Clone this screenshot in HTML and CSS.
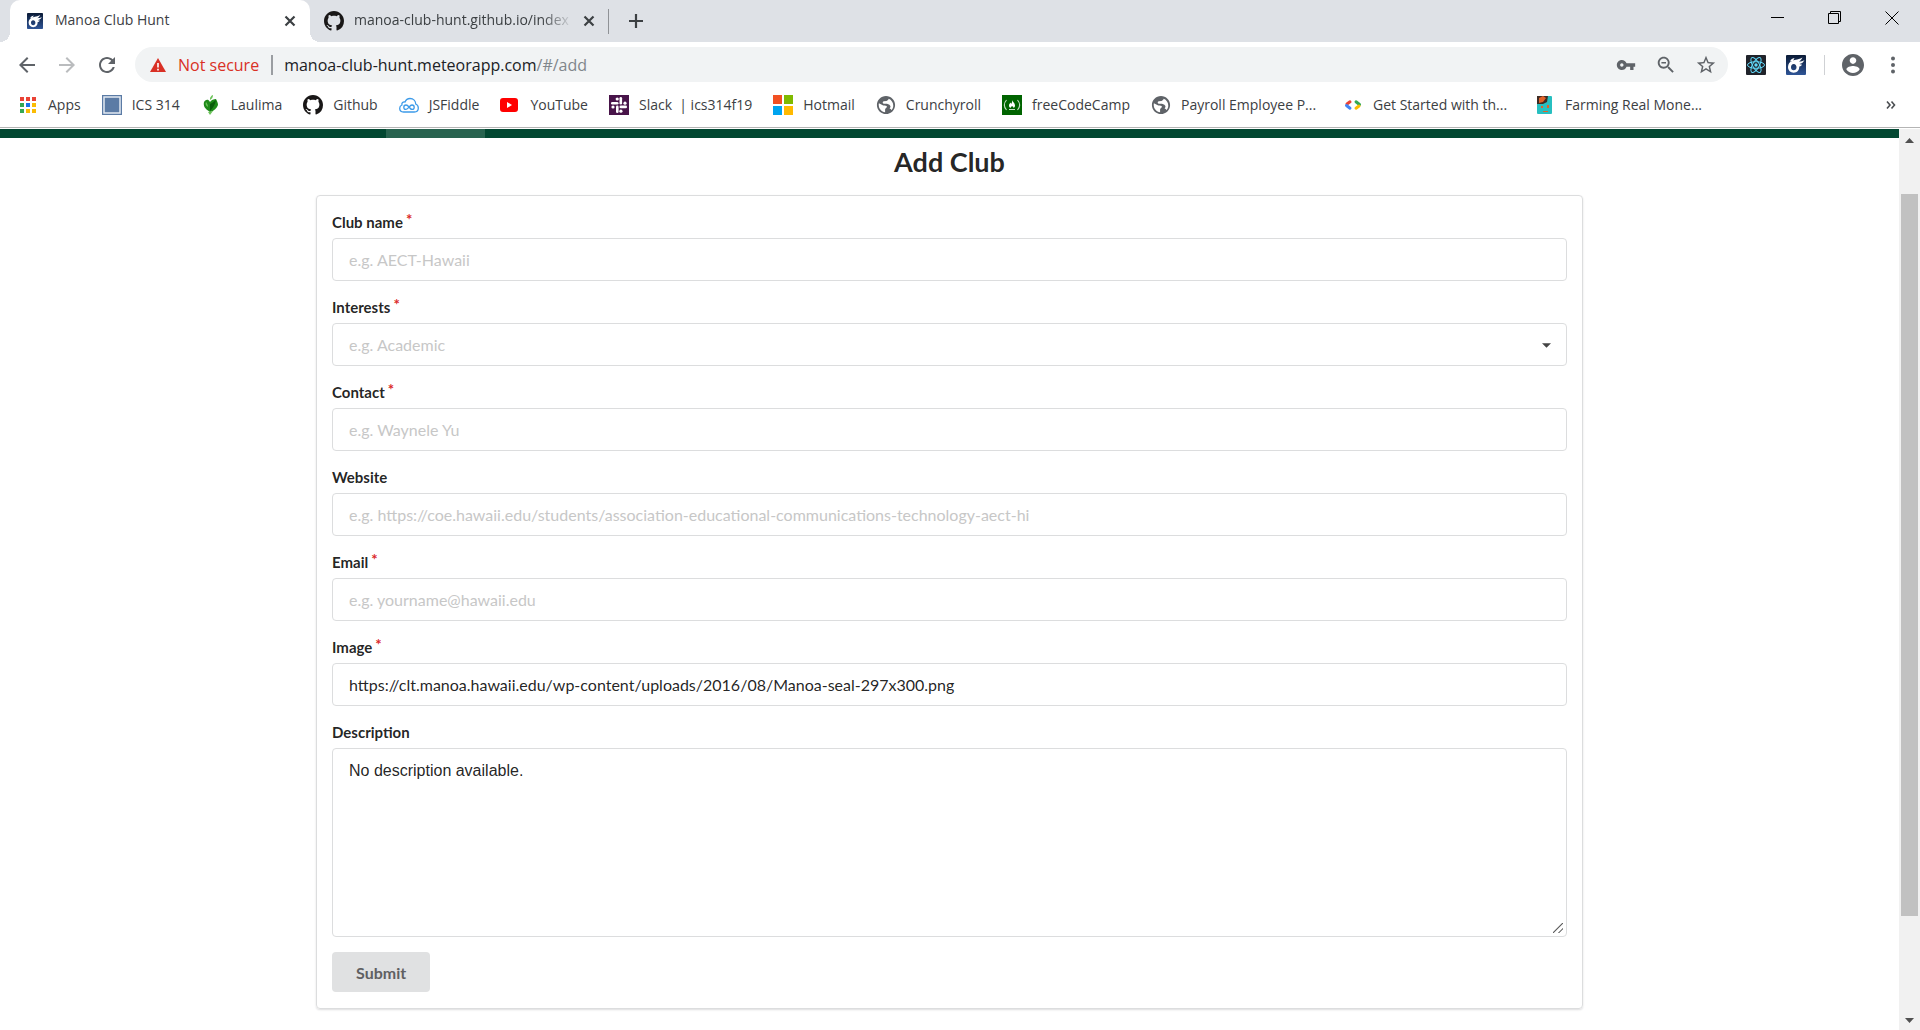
FILE: index.html
```html
<!DOCTYPE html>
<html lang="en">
<head>
<meta charset="utf-8">
<title>Manoa Club Hunt</title>
<link rel="stylesheet" href="styles.css">
</head>
<body>
<svg class="sprites" aria-hidden="true">
  <defs>
    <linearGradient id="navy" x1="0" y1="0" x2="0" y2="1"><stop offset="0" stop-color="#0a1a35"/><stop offset="1" stop-color="#2f5597"/></linearGradient>
    <symbol id="github" viewBox="0 0 16 16"><path fill="#191717" d="M8 0C3.58 0 0 3.58 0 8c0 3.54 2.29 6.53 5.47 7.59.4.07.55-.17.55-.38 0-.19-.01-.82-.01-1.49-2.01.37-2.53-.49-2.69-.94-.09-.23-.48-.94-.82-1.13-.28-.15-.68-.52-.01-.53.63-.01 1.08.58 1.23.82.72 1.21 1.87.87 2.33.66.07-.52.28-.87.51-1.07-1.78-.2-3.64-.89-3.64-3.95 0-.87.31-1.59.82-2.15-.08-.2-.36-1.02.08-2.12 0 0 .67-.21 2.2.82.64-.18 1.32-.27 2-.27s1.36.09 2 .27c1.53-1.04 2.2-.82 2.2-.82.44 1.1.16 1.92.08 2.12.51.56.82 1.27.82 2.15 0 3.07-1.87 3.75-3.65 3.95.29.25.54.73.54 1.48 0 1.07-.01 1.93-.01 2.2 0 .21.15.46.55.38A8.01 8.01 0 0 0 16 8c0-4.42-3.58-8-8-8z"/></symbol>
    <symbol id="comet" viewBox="0 0 20 20"><rect width="20" height="20" rx="1" fill="url(#navy)"/><path fill="#fff" fill-rule="evenodd" d="M2 12C2 8.500 4 7 6 6 8 4.500 11 5.500 16.500 2.500 15.500 4.500 14.500 5.500 13 6.500 15 6.500 17 6 18.500 5 17 8 15.500 8.500 13.500 9 14.500 9.500 15.500 9.500 16 9.500 15.500 11 14 11.500 13.200 11.500 13.600 15 11 17.700 7.700 17.700 4.500 17.700 2 15.500 2 12zM7.700 9C6 9 5 10.300 5 12.200 5 14 6 15.200 7.700 15.200 9.400 15.200 10.500 14 10.500 12.200 10.500 10.300 9.400 9 7.700 9z"/><path d="M4 6.500C4.500 4.500 6 3.500 8.500 3L7 6z" fill="#fff"/></symbol>
    <symbol id="globe" viewBox="1 1 22 22"><path fill="#5f6368" d="M12 2C6.480 2 2 6.480 2 12s4.480 10 10 10 10-4.480 10-10S17.520 2 12 2zm-1 17.930c-3.950-.490-7-3.850-7-7.930 0-.620.080-1.210.210-1.790L9 12.500c2 0 4 0 4 1.500s-2 1.500-2 3zm6.900-2.540c-.260-.810-1-1.390-1.900-1.390l1-2c0-2-2-3-4-3.500H9.500c-1.500 0-1.500-2 0-2.500l3-.500c1.500-.500 2-1.500 2.500-2.410 2.930 1.190 5 4.060 5 7.410 0 2.080-.800 3.970-2.100 5.390z"/></symbol>
    <symbol id="cross" viewBox="0 0 12 12"><path d="M1.500 1.500l9 9M10.500 1.500l-9 9" stroke="#3c4043" stroke-width="2.200" fill="none"/></symbol>
  </defs>
</svg>

<header class="browser">
  <div class="tabstrip">
    <div class="tab tab-active">
      <svg class="icon-16"><use href="#comet"/></svg>
      <span class="tab-title">Manoa Club Hunt</span>
      <button class="tab-close" aria-label="Close tab"><svg class="icon-12"><use href="#cross"/></svg></button>
    </div>
    <div class="tab">
      <svg class="icon-20"><use href="#github"/></svg>
      <span class="tab-title tab-title-fade">manoa-club-hunt.github.io/index</span>
      <button class="tab-close" aria-label="Close tab"><svg class="icon-12"><use href="#cross"/></svg></button>
    </div>
    <button class="new-tab" aria-label="New tab"><svg class="icon-16" viewBox="0 0 16 16"><path d="M8 1v14M1 8h14" stroke="#3c4043" stroke-width="2.200"/></svg></button>
    <div class="window-controls">
      <button aria-label="Minimize"><svg class="icon-14" viewBox="0 0 14 14"><path d="M0 6.500h13" stroke="#000"/></svg></button>
      <button aria-label="Restore"><svg class="icon-14" viewBox="0 0 14 14"><path d="M.5 2.500h10v10H.5zM2.500 2.500V.5h10v10h-2" fill="none" stroke="#000"/></svg></button>
      <button aria-label="Close"><svg class="icon-14" viewBox="0 0 14 14"><path d="M.5.5l13 13M13.500.5l-13 13" stroke="#000"/></svg></button>
    </div>
  </div>

  <div class="toolbar">
    <button class="tool" aria-label="Back"><svg class="icon-24" viewBox="0 0 24 24"><path fill="#5f6368" d="M20 11H7.830l5.590-5.590L12 4l-8 8 8 8 1.410-1.410L7.830 13H20v-2z"/></svg></button>
    <button class="tool" aria-label="Forward"><svg class="icon-24" viewBox="0 0 24 24"><path fill="#babcbe" d="M4 11h12.170l-5.590-5.590L12 4l8 8-8 8-1.410-1.410L16.170 13H4v-2z"/></svg></button>
    <button class="tool" aria-label="Reload"><svg class="icon-24" viewBox="0 0 24 24"><path fill="#5f6368" d="M17.650 6.350C16.200 4.900 14.210 4 12 4c-4.420 0-7.990 3.580-7.990 8s3.570 8 7.990 8c3.730 0 6.840-2.550 7.730-6h-2.080c-.820 2.330-3.040 4-5.650 4-3.310 0-6-2.690-6-6s2.690-6 6-6c1.660 0 3.140.690 4.220 1.780L13 11h7V4l-2.350 2.350z"/></svg></button>
    <div class="omnibox">
      <svg class="icon-16" viewBox="0 0 16 16"><path d="M8 1l8 14H0z" fill="#d93025"/><path d="M8 6v4.500M8 11.800v1.700" stroke="#fff" stroke-width="1.600"/></svg>
      <span class="not-secure">Not secure</span>
      <span class="url">manoa-club-hunt.meteorapp.com<span class="url-path">/#/add</span></span>
      <div class="omnibox-actions">
        <button class="tool" aria-label="Saved passwords"><svg class="icon-20" viewBox="0 0 24 24"><path fill="#5f6368" d="M12.650 10C11.830 7.670 9.610 6 7 6c-3.310 0-6 2.690-6 6s2.690 6 6 6c2.610 0 4.830-1.670 5.650-4H17v4h4v-4h2v-4H12.650zM7 14c-1.100 0-2-.900-2-2s.900-2 2-2 2 .900 2 2-.900 2-2 2z"/></svg></button>
        <button class="tool" aria-label="Zoom"><svg class="icon-22" viewBox="0 0 24 24"><path fill="#5f6368" d="M15.500 14h-.790l-.280-.270C15.410 12.590 16 11.110 16 9.500 16 5.910 13.090 3 9.500 3S3 5.910 3 9.500 5.910 16 9.500 16c1.610 0 3.090-.590 4.230-1.570l.270.280v.790l5 4.990L20.490 19l-4.990-5zm-6 0C7.010 14 5 11.990 5 9.500S7.010 5 9.500 5 14 7.010 14 9.500 11.990 14 9.500 14zM7 8.700h5v1.600H7z"/></svg></button>
        <button class="tool" aria-label="Bookmark this page"><svg class="icon-22" viewBox="0 0 24 24"><path fill="#5f6368" d="M22 9.240l-7.190-.620L12 2 9.190 8.630 2 9.240l5.460 4.730L5.820 21 12 17.270 18.180 21l-1.630-7.030L22 9.240zM12 15.400l-3.760 2.270 1-4.280-3.320-2.880 4.380-.380L12 6.100l1.710 4.040 4.380.380-3.320 2.880 1 4.280L12 15.400z"/></svg></button>
      </div>
    </div>
    <button class="tool" aria-label="React Developer Tools"><svg class="icon-20" viewBox="0 0 20 20"><rect width="20" height="20" rx="1" fill="#20232a"/><g fill="none" stroke="#61dafb" stroke-width="1"><ellipse cx="10" cy="10" rx="8.500" ry="3.300"/><ellipse cx="10" cy="10" rx="8.500" ry="3.300" transform="rotate(60 10 10)"/><ellipse cx="10" cy="10" rx="8.500" ry="3.300" transform="rotate(120 10 10)"/></g><circle cx="10" cy="10" r="1.700" fill="#61dafb"/></svg></button>
    <button class="tool" aria-label="Meteor DevTools"><svg class="icon-20"><use href="#comet"/></svg></button>
    <span class="divider"></span>
    <button class="tool" aria-label="Profile"><svg class="icon-22" viewBox="2 2 20 20"><path fill="#5f6368" d="M12 2C6.480 2 2 6.480 2 12s4.480 10 10 10 10-4.480 10-10S17.520 2 12 2zm0 3c1.660 0 3 1.340 3 3s-1.340 3-3 3-3-1.340-3-3 1.340-3 3-3zm0 14.200c-2.500 0-4.710-1.280-6-3.220.030-1.990 4-3.080 6-3.080 1.990 0 5.970 1.090 6 3.080-1.290 1.940-3.500 3.220-6 3.220z"/></svg></button>
    <button class="tool" aria-label="Menu"><svg class="icon-18" viewBox="0 0 18 18"><g fill="#5f6368"><circle cx="9" cy="2.500" r="2"/><circle cx="9" cy="9" r="2"/><circle cx="9" cy="15.500" r="2"/></g></svg></button>
  </div>

  <nav class="bookmarks">
    <a href="#"><svg class="icon-20" viewBox="0 0 20 20"><path fill="#ea4335" d="M2 2h4v4H2zM8 2h4v4H8zM14 2h4v4h-4z"/><path fill="#34a853" d="M2 8h4v4H2zM2 14h4v4H2z"/><path fill="#1a73e8" d="M8 8h4v4H8z"/><path fill="#fbbc04" d="M14 8h4v4h-4zM8 14h4v4H8zM14 14h4v4h-4z"/></svg>Apps</a>
    <a href="#"><svg class="icon-20" viewBox="0 0 20 20"><path fill="#5b7ba5" d="M0 0h20v20H0z"/><path fill="none" stroke="#e4eaf2" stroke-width="1.500" d="M2 2h16v16H2z"/></svg>ICS 314</a>
    <a href="#"><svg class="icon-20" viewBox="0 0 20 20"><path fill="#1f8a1a" d="M9 7C7 3 4 5 3 7c-1 4 1 7 6 10 4-1 7-4 8-7 0-2-1-4-2-6-2 0-5 1-6 3z"/><path fill="#0b5c0c" d="M9 9c3-1 4-3 6-4-1 5-3 8-6 11z"/><path fill="#6cc35a" d="M9 3c1-2 2-3 3-3 0 2-1 4-3 5zM5 7c-1 2 0 4 2 5 0-2-1-4-2-5zM7 17l2 3 3-4z"/></svg>Laulima</a>
    <a href="#"><svg class="icon-20"><use href="#github"/></svg>Github</a>
    <a href="#"><svg class="icon-20" viewBox="0 0 20 20"><g fill="none" stroke="#3d9be9" stroke-width="1.300"><path d="M4.500 17C2 17 .7 15.300.7 13.300c0-1.600 1-2.800 2.200-3.300C2.500 8 4 6.500 6 7c1-2.500 3-3.500 5-3.500 3.500 0 5.700 2.500 5.700 5.500 1.500.5 2.600 2 2.600 4 0 2.300-1.500 4-4 4z"/><path d="M10 12c-1-1.300-1.800-2-3-2-1.300 0-2.200 1-2.200 2.200s1 2.200 2.200 2.200c2.500 0 3.500-4.400 6-4.400 1.300 0 2.200 1 2.200 2.200s-1 2.200-2.200 2.200c-1.200 0-2-1-3-2.400z"/></g></svg>JSFiddle</a>
    <a href="#"><svg class="icon-20" viewBox="0 0 20 20"><rect x="0" y="3" width="18" height="14" rx="3" fill="#f00"/><path fill="#fff" d="M7 7l5 3-5 3z"/></svg>YouTube</a>
    <a href="#"><svg class="icon-20" viewBox="0 0 20 20"><path fill="#481449" d="M0 0h20v20H0z"/><g fill="#fff"><rect x="2" y="7" width="7.500" height="2.600" rx="1.300"/><rect x="10.500" y="2" width="2.600" height="7.500" rx="1.300"/><rect x="10.500" y="10.600" width="7.500" height="2.600" rx="1.300"/><rect x="7" y="10.600" width="2.600" height="7.500" rx="1.300"/><circle cx="8.200" cy="4" r="1.600"/><circle cx="16" cy="8.200" r="1.600"/><circle cx="11.900" cy="16.200" r="1.600"/><circle cx="4" cy="12" r="1.600"/></g></svg>Slack&nbsp; | ics314f19</a>
    <a href="#"><svg class="icon-20" viewBox="0 0 20 20"><path fill="#f25022" d="M0 0h9v9H0z"/><path fill="#7fba00" d="M11 0h9v9h-9z"/><path fill="#00a4ef" d="M0 11h9v9H0z"/><path fill="#ffb900" d="M11 11h9v9h-9z"/></svg>Hotmail</a>
    <a href="#"><svg class="icon-20"><use href="#globe"/></svg>Crunchyroll</a>
    <a href="#"><svg class="icon-20" viewBox="0 0 20 20"><path fill="#006400" d="M0 0h20v20H0z"/><path fill="none" stroke="#c6dfc6" stroke-width="1.100" d="M4.500 5c-2.600 3-2.600 7 0 10M15.500 5c2.600 3 2.600 7 0 10M7 14.500h6"/><path fill="#fff" d="M10 5c.5 2 3 3 3 5.500 0 1-.5 2-1.500 2.500 0-1-.5-1.500-1.500-2-.5 1-1.500 1-1.500 2C7.500 12.500 7 11.500 7 10.500 7 9 8 8.500 8.500 7.500c.5.500.5 1 .5 1.500 1-1 1.300-2.500 1-4z"/></svg>freeCodeCamp</a>
    <a class="bookmark-long" href="#"><svg class="icon-20"><use href="#globe"/></svg>Payroll Employee P...</a>
    <a class="bookmark-long" href="#"><svg class="icon-20" viewBox="0 0 20 20"><g fill="none" stroke-width="3" stroke-linecap="round"><path stroke="#ea4335" d="M4 9l3-2.200"/><path stroke="#4285f4" d="M3.500 10.500l3.500 2.700"/><path stroke="#34a853" d="M13 6.800l3.500 2.700"/><path stroke="#fbbc04" d="M13 13.200l3-2.200"/></g></svg>Get Started with th...</a>
    <a class="bookmark-long" href="#"><svg class="icon-20" viewBox="0 0 20 20"><rect x="2" y="1" width="15" height="18" rx="1" fill="#27bfc0"/><path fill="#3d2b24" d="M2 1h11l-1 6-4 2H2z"/><path fill="#e0622a" d="M4 3l4-2 3 2-3 4-4 1zM6 11h2v2H6zM12 10h2v3h-2zM8 16h5v1H8z"/></svg>Farming Real Mone...</a>
    <button class="overflow" aria-label="More bookmarks"><svg class="icon-10" viewBox="0 0 10 10"><path d="M1 1.500L4 5 1 8.500M5.500 1.500L8.500 5l-3 3.500" fill="none" stroke="#4a4d51" stroke-width="1.600"/></svg></button>
  </nav>
</header>

<div class="viewport">
  <main class="page">
    <div class="site-nav"><span class="site-nav-active"></span></div>
    <h2 class="title">Add Club</h2>
    <form class="segment">
      <div class="field required"><label for="name">Club name</label><input id="name" type="text" placeholder="e.g. AECT-Hawaii"></div>
      <div class="field required"><label for="interests">Interests</label>
        <div class="dropdown">
          <select id="interests"><option>e.g. Academic</option></select>
          <svg class="caret" viewBox="0 0 10 5"><path d="M0 0h10L5 5z" fill="#444"/></svg>
        </div>
      </div>
      <div class="field required"><label for="contact">Contact</label><input id="contact" type="text" placeholder="e.g. Waynele Yu"></div>
      <div class="field"><label for="website">Website</label><input id="website" type="text" placeholder="e.g. https://coe.hawaii.edu/students/association-educational-communications-technology-aect-hi"></div>
      <div class="field required"><label for="email">Email</label><input id="email" type="text" placeholder="e.g. yourname@hawaii.edu"></div>
      <div class="field required"><label for="image">Image</label><input id="image" type="text" value="https://clt.manoa.hawaii.edu/wp-content/uploads/2016/08/Manoa-seal-297x300.png"></div>
      <div class="field"><label for="description">Description</label><textarea id="description">No description available.</textarea></div>
      <button class="submit" type="submit">Submit</button>
    </form>
  </main>
  <div class="scrollbar" aria-hidden="true">
    <svg class="scroll-arrow" viewBox="0 0 9 5"><path d="M0 5h9L4.500 0z" fill="#505050"/></svg>
    <div class="track"><div class="thumb"></div></div>
    <svg class="scroll-arrow" viewBox="0 0 9 5"><path d="M0 0h9L4.500 5z" fill="#505050"/></svg>
  </div>
</div>
</body>
</html>
```
FILE: styles.css
```css
* { box-sizing: border-box; }

body {
  margin: 0;
  min-height: 100vh;
  display: flex;
  flex-direction: column;
  background: #fff;
  color: rgba(0, 0, 0, .87);
  font-family: Lato, "Liberation Sans", sans-serif;
}

button {
  padding: 0;
  border: 0;
  background: none;
  font: inherit;
}

svg { display: block; flex: none; }
.sprites { position: absolute; width: 0; height: 0; }
.icon-10 { width: 10px; height: 10px; }
.icon-12 { width: 12px; height: 12px; }
.icon-14 { width: 14px; height: 14px; }
.icon-16 { width: 16px; height: 16px; }
.icon-18 { width: 18px; height: 18px; }
.icon-20 { width: 20px; height: 20px; }
.icon-22 { width: 22px; height: 22px; }
.icon-24 { width: 24px; height: 24px; }

/* Browser frame */
.browser {
  color: #3c4043;
  font-family: "Open Sans", "Noto Sans", sans-serif;
  font-size: 14px;
  border-bottom: 1px solid #b4b4b4;
  margin-bottom: 1px;
}

.tabstrip {
  display: flex;
  align-items: stretch;
  height: 42px;
  padding-left: 10px;
  background: #dee1e6;
}

.tab {
  display: flex;
  align-items: center;
  gap: 10px;
  width: 298px;
  padding: 0 13px 0 14px;
}
.tab-active {
  position: relative;
  width: 300px;
  padding: 0 14px 0 17px;
  gap: 12px;
  background: #fff;
  border-radius: 10px 10px 0 0;
}
.tab-active::before,
.tab-active::after {
  content: "";
  position: absolute;
  bottom: 0;
  width: 10px;
  height: 10px;
}
.tab-active::before { right: 100%; background: radial-gradient(circle at 0 0, #dee1e6 10px, #fff 10px); }
.tab-active::after { left: 100%; background: radial-gradient(circle at 100% 0, #dee1e6 10px, #fff 10px); }

.tab-title {
  flex: 1;
  min-width: 0;
  white-space: nowrap;
  line-height: 20px;
  padding-bottom: 2px;
}
.tab-title-fade { mask-image: linear-gradient(to right, #000 86%, transparent); }
.tab-close { display: flex; }

.new-tab {
  display: flex;
  align-items: center;
  align-self: center;
  height: 25px;
  padding-left: 19px;
  border-left: 1px solid #8f9296;
}

.window-controls {
  display: flex;
  margin-left: auto;
  align-items: flex-start;
}
.window-controls button {
  display: flex;
  justify-content: center;
  width: 57px;
  padding-top: 11px;
}

.toolbar {
  display: flex;
  align-items: center;
  height: 45px;
  padding: 0 7px;
}
.tool {
  display: flex;
  align-items: center;
  justify-content: center;
  width: 40px;
  height: 35px;
}
.omnibox {
  flex: 1;
  display: flex;
  align-items: center;
  height: 35px;
  margin: 0 8px;
  padding: 0 2px 0 15px;
  border-radius: 18px;
  background: #f1f3f4;
  font-size: 16px;
  white-space: nowrap;
}
.not-secure {
  margin: 0 12px;
  color: #d93025;
}
.url {
  padding-left: 11px;
  border-left: 2px solid #9a9da1;
  line-height: 20px;
  color: #202124;
}
.url-path { color: #80868b; }
.omnibox-actions { display: flex; margin-left: auto; }
.divider {
  width: 1px;
  height: 20px;
  margin: 0 8px;
  background: #cfd1d4;
}

.bookmarks {
  display: flex;
  align-items: center;
  gap: 21px;
  height: 40px;
  padding: 0 24px 5px 18px;
  white-space: nowrap;
}
.bookmarks a {
  display: flex;
  align-items: center;
  gap: 10px;
  color: inherit;
  text-decoration: none;
}
.bookmarks .bookmark-long { min-width: 171px; }
.overflow { margin-left: auto; }

/* Web page */
.viewport { flex: 1; display: flex; }
.page { flex: 1; min-width: 0; }

.site-nav {
  display: flex;
  height: 9px;
  padding-left: 386px;
  background: #024731;
}
.site-nav-active { width: 99px; background: #28634f; }

.title {
  margin: 8px 0 17px;
  font-size: 27px;
  line-height: 32px;
  text-align: center;
}

.segment {
  max-width: 1267px;
  margin: 0 auto 20px;
  padding: 15px 15px 16px;
  border: 1px solid #dcddde;
  border-radius: 4px;
  box-shadow: 0 1px 2px rgba(34, 36, 38, .15);
}

.field { margin-bottom: 15px; }
.field label {
  display: block;
  margin-bottom: 4px;
  font-size: 15px;
  font-weight: 700;
  line-height: 23px;
}
.required label::after {
  content: "*";
  display: inline-block;
  vertical-align: top;
  margin: -3px 0 0 3px;
  color: #db2828;
}

.field input,
.field select,
.field textarea {
  display: block;
  width: 100%;
  height: 43px;
  padding: 0 16px;
  border: 1px solid #dcddde;
  border-radius: 4px;
  background: #fff;
  color: rgba(0, 0, 0, .87);
  font-family: inherit;
  font-size: 16px;
}
.field input::placeholder { color: #c7c7c7; }
.dropdown { position: relative; }
.field select { appearance: none; color: #c7c7c7; }
.caret {
  position: absolute;
  top: 20px;
  right: 16px;
  width: 9px;
  height: 5px;
}
.field textarea {
  height: 189px;
  padding: 12px 16px;
  font-family: "Liberation Sans", sans-serif;
  line-height: 20px;
  resize: vertical;
}
.field textarea::-webkit-resizer {
  background: linear-gradient(135deg, transparent 6px, #555 7px, transparent 8px, transparent 10px, #555 11px, transparent 12px) 2px 2px / 10px 10px no-repeat;
}

.submit {
  display: block;
  height: 40px;
  padding: 0 24px;
  border-radius: 4px;
  background: #e0e1e2;
  color: #5f6062;
  font-size: 16px;
  font-weight: 700;
}

/* Scrollbar of the page */
.scrollbar {
  display: flex;
  flex-direction: column;
  align-items: center;
  gap: 8px;
  width: 21px;
  padding: 9px 0 7px;
  background: #f1f1f1;
}
.scroll-arrow { width: 9px; height: 5px; }
.track { flex: 1; display: flex; flex-direction: column; }
.thumb { width: 17px; height: 84%; margin-top: 43px; background: #c1c1c1; }
```
